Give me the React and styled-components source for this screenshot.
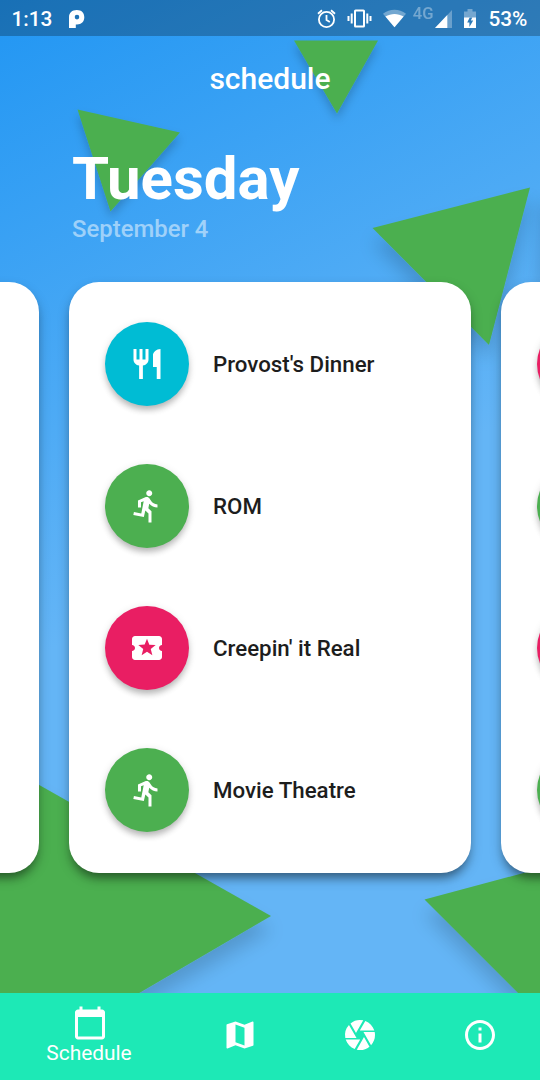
import React from "react";
import styled, { createGlobalStyle } from "styled-components";
import {
  MdRestaurant,
  MdDirectionsRun,
  MdLocalPlay,
  MdCalendarToday,
  MdMap,
  MdCamera,
  MdInfoOutline,
} from "react-icons/md";

const Global = createGlobalStyle`
  *, *::before, *::after { box-sizing: border-box; }
  body { margin: 0; font-family: Roboto, sans-serif; }
  svg { display: block; flex: none; }
`;

const Screen = styled.div`
  position: relative;
  isolation: isolate;
  width: 540px;
  height: 1080px;
  display: flex;
  flex-direction: column;
  overflow: hidden;
  color: #fff;
  background: linear-gradient(153.4deg, #2196f3 0%, #64b5f6 50%);
`;

const Backdrop = styled.svg`
  position: absolute;
  inset: 0;
  z-index: -1;
  polygon {
    fill: #4caf50;
  }
`;

const StatusBar = styled.div`
  height: 36px;
  flex: none;
  display: flex;
  align-items: center;
  justify-content: space-between;
  padding: 1px 12.6px 0 11.5px;
  background: rgba(0, 0, 0, 0.25);
  font-size: 20.8px;
  font-weight: 500;
  line-height: 36px;
`;

const StatusGroup = styled.div`
  display: flex;
  align-items: center;
  gap: ${(p) => p.$gap}px;
`;

const Network = styled.span`
  font-size: 16.6px;
  line-height: 18px;
  height: 28px;
  opacity: 0.35;
  margin-right: 2px;
`;

const AppTitle = styled.h1`
  margin: 0;
  height: 84px;
  flex: none;
  text-align: center;
  font-size: 30px;
  font-weight: 500;
  line-height: 86px;
`;

const DayHeader = styled.header`
  height: 162px;
  flex: none;
  padding: 24px 72px 0;
`;

const Day = styled.h2`
  margin: 0;
  font-size: 60px;
  font-weight: 700;
  line-height: 70px;
`;

const DateText = styled.p`
  margin: 1px 0 0;
  font-size: 23.9px;
  font-weight: 500;
  line-height: 28px;
  color: rgba(255, 255, 255, 0.5);
`;

const Carousel = styled.main`
  flex: 1;
  display: flex;
  justify-content: center;
  gap: 30px;
`;

const Card = styled.section`
  width: 402px;
  height: 591px;
  flex: none;
  display: flex;
  flex-direction: column;
  gap: 58px;
  padding: 40.4px 36px;
  border-radius: 30px;
  background: #fff;
  box-shadow: 0 8px 8px -4px rgba(0, 0, 0, 0.3), 0 6px 12px rgba(0, 0, 0, 0.25);
`;

const Event = styled.div`
  display: flex;
  align-items: center;
  gap: 24px;
  height: 83.8px;
  font-size: 22.3px;
  font-weight: 500;
  color: #1d1d1d;
`;

const EventBadge = styled.div`
  width: 84px;
  height: 84px;
  flex: none;
  display: grid;
  place-items: center;
  border-radius: 50%;
  color: #fff;
  background: ${(p) => p.$color};
  box-shadow: 0 5px 6px -1px rgba(0, 0, 0, 0.22), 0 2px 9px rgba(0, 0, 0, 0.12);
`;

const NavBar = styled.nav`
  height: 87px;
  flex: none;
  display: grid;
  grid-template-columns: 180px repeat(3, 120px);
  background: #1de9b6;
`;

const NavItem = styled.a`
  display: flex;
  flex-direction: column;
  align-items: center;
  padding-top: ${(p) => (p.$active ? 12 : 24)}px;
`;

const NavLabel = styled.span`
  margin: 0 2px 0 0;
  font-size: 20.9px;
  line-height: 25px;
`;

const CYAN = "#00bcd4";
const GREEN = "#4caf50";
const PINK = "#e91e63";

const today = [
  { title: "Provost's Dinner", color: CYAN, icon: MdRestaurant },
  { title: "ROM", color: GREEN, icon: MdDirectionsRun },
  { title: "Creepin' it Real", color: PINK, icon: MdLocalPlay },
  { title: "Movie Theatre", color: GREEN, icon: MdDirectionsRun },
];

const tomorrow = [
  { color: PINK, icon: MdLocalPlay },
  { color: GREEN, icon: MdDirectionsRun },
  { color: PINK, icon: MdLocalPlay },
  { color: GREEN, icon: MdDirectionsRun },
];

function DayCard({ events }) {
  return (
    <Card>
      {events.map(({ title, color, icon: Icon }, i) => (
        <Event key={i}>
          <EventBadge $color={color}>
            <Icon size={36} />
          </EventBadge>
          {title}
        </Event>
      ))}
    </Card>
  );
}

function Triangles() {
  return (
    <Backdrop width="540" height="1080" viewBox="0 0 540 1080">
      <defs>
        <filter id="soft" x="-30%" y="-30%" width="160%" height="160%">
          <feDropShadow dx="0" dy="6" stdDeviation="5" floodColor="#000" floodOpacity="0.2" />
        </filter>
        <filter id="deep" x="-30%" y="-30%" width="160%" height="160%">
          <feDropShadow dx="0" dy="14" stdDeviation="9" floodColor="#000" floodOpacity="0.16" />
        </filter>
      </defs>
      <polygon filter="url(#soft)" points="294,40.5 378,40.5 337,113.5" />
      <polygon filter="url(#soft)" points="77.5,109.5 180,132.5 110.5,211.5" />
      <polygon filter="url(#deep)" points="372.5,228 530,187.5 489,345" />
      <polygon filter="url(#deep)" points="541,190 640,200 541,280" />
      <polygon filter="url(#deep)" points="271,916 -90,712 -90,1127" />
      <polygon filter="url(#deep)" points="424.5,899.5 740,815 660,1135" />
    </Backdrop>
  );
}

function AppMark() {
  return (
    <svg width="16" height="18" viewBox="0 0 16 18">
      <path
        fill="#fff"
        fillRule="evenodd"
        d="M0 18V7C0 2.800 3 0 7.800 0S15.300 2.800 15.300 7.300 12.500 14.500 8 14.500H6.800V18zM8 4.800A2.300 2.300 0 1 0 8 9.400 2.300 2.300 0 1 0 8 4.800z"
      />
    </svg>
  );
}

function StatusIcons() {
  return (
    <>
      <svg width="19" height="20" viewBox="0 0 19 20" fill="none" stroke="#fff" strokeWidth="1.8">
        <circle cx="9.500" cy="10.500" r="7.600" />
        <path d="M9.500 6v5l3.300 2M1 4.700l4-3.500M18 4.700l-4-3.500" />
      </svg>
      <svg width="25" height="20" viewBox="0 0 25 20" fill="none" stroke="#fff" strokeWidth="2">
        <rect x="8" y="1.500" width="9" height="16" rx="0.600" />
        <path d="M4.700 4.500v10M20.300 4.500v10M1.500 7v5M23.500 7v5" />
      </svg>
      <svg width="23" height="20" viewBox="0 0 24 20" fill="#fff">
        <path d="M0 4.500C7-1 17-1 24 4.500L12 18.500z" opacity="0.35" />
        <path d="M2.500 7.500C8.500 3.800 15.500 3.800 21.500 7.500L12 18.500z" />
      </svg>
    </>
  );
}

function SignalBattery() {
  return (
    <>
      <svg width="17" height="18" viewBox="0 0 17 18" fill="#fff">
        <path d="M17 0v18H0z" opacity="0.3" />
        <path d="M12.300 5v13H0z" />
      </svg>
      <svg width="12" height="20" viewBox="0 0 12 20" fill="#fff">
        <path d="M0 2.500h3.500V0h5v2.500H12V9H0z" opacity="0.35" />
        <path d="M0 8.500h5.700L3.200 13.500h2.200V18l3.800-6.400H6.800L8.300 8.500H12V19H0z" />
      </svg>
    </>
  );
}

export default function App() {
  return (
    <Screen>
      <Global />
      <Triangles />
      <StatusBar>
        <StatusGroup $gap={17}>
          <span>1:13</span>
          <AppMark />
        </StatusGroup>
        <StatusGroup $gap={7}>
          <StatusGroup $gap={10.8}>
            <StatusIcons />
          </StatusGroup>
          <StatusGroup $gap={0}>
            <Network>4G</Network>
            <StatusGroup $gap={12}>
              <SignalBattery />
              <span>53%</span>
            </StatusGroup>
          </StatusGroup>
        </StatusGroup>
      </StatusBar>
      <AppTitle>schedule</AppTitle>
      <DayHeader>
        <Day>Tuesday</Day>
        <DateText>September 4</DateText>
      </DayHeader>
      <Carousel>
        <DayCard events={[]} />
        <DayCard events={today} />
        <DayCard events={tomorrow} />
      </Carousel>
      <NavBar>
        <NavItem $active>
          <MdCalendarToday size={36} />
          <NavLabel>Schedule</NavLabel>
        </NavItem>
        <NavItem>
          <MdMap size={36} />
        </NavItem>
        <NavItem>
          <MdCamera size={36} />
        </NavItem>
        <NavItem>
          <MdInfoOutline size={36} />
        </NavItem>
      </NavBar>
    </Screen>
  );
}
